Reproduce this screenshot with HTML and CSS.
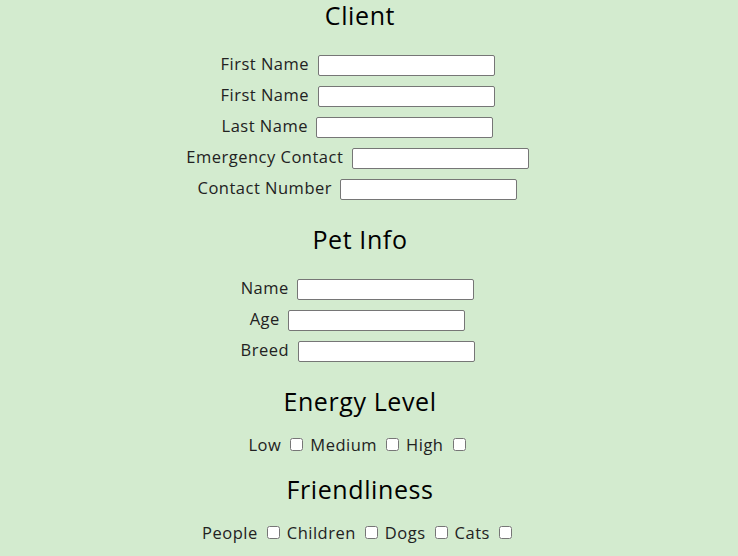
FILE: index.html
```html
<!DOCTYPE html>
<html lang="en">
<head>
<meta charset="utf-8">
<title>Pet Form</title>
<link rel="stylesheet" href="styles.css">
</head>
<body>
<main class="page">
  <section class="section">
    <h2 class="title">Client</h2>
    <div class="rows">
      <div class="row"><label class="label">First Name</label><input class="field" type="text"></div>
      <div class="row"><label class="label">First Name</label><input class="field" type="text"></div>
      <div class="row"><label class="label">Last Name</label><input class="field" type="text"></div>
      <div class="row"><label class="label">Emergency Contact</label><input class="field" type="text"></div>
      <div class="row"><label class="label">Contact Number</label><input class="field" type="text"></div>
    </div>
  </section>
  <section class="section">
    <h2 class="title">Pet Info</h2>
    <div class="rows">
      <div class="row"><label class="label">Name</label><input class="field" type="text"></div>
      <div class="row"><label class="label">Age</label><input class="field" type="text"></div>
      <div class="row"><label class="label">Breed</label><input class="field" type="text"></div>
    </div>
  </section>
  <section class="section section-checks">
    <h2 class="title">Energy Level</h2>
    <div class="checks">
      <label class="check">Low <input class="box" type="checkbox"></label>
      <label class="check">Medium <input class="box" type="checkbox"></label>
      <label class="check">High <input class="box" type="checkbox"></label>
    </div>
  </section>
  <section class="section section-checks">
    <h2 class="title">Friendliness</h2>
    <div class="checks">
      <label class="check">People <input class="box" type="checkbox"></label>
      <label class="check">Children <input class="box" type="checkbox"></label>
      <label class="check">Dogs <input class="box" type="checkbox"></label>
      <label class="check">Cats <input class="box" type="checkbox"></label>
    </div>
  </section>
</main>
</body>
</html>
```
FILE: styles.css
```css
html, body {
  margin: 0;
  padding: 0;
  background: #d3ebcf;
}
body {
  font-family: "Open Sans", "DejaVu Sans", sans-serif;
  color: #222;
}
.page {
  width: 720px;
  display: flex;
  flex-direction: column;
}
.section {
  display: flex;
  flex-direction: column;
  align-items: center;
  margin-bottom: 19px;
}
.section-checks {
  margin-bottom: 13px;
}
.title {
  margin: 0 0 18px;
  height: 32px;
  line-height: 30px;
  font-size: 25px;
  letter-spacing: 0.6px;
  font-weight: 400;
  color: #000;
}
.section-checks .title {
  margin-bottom: 12px;
}
.rows {
  display: flex;
  flex-direction: column;
  align-items: center;
  padding-right: 5px;
}
.row {
  height: 31px;
  display: flex;
  align-items: center;
  gap: 8.5px;
}
.label {
  font-size: 16.5px;
  letter-spacing: 0.5px;
  line-height: 20px;
  margin-bottom: 3px;
}
.field {
  box-sizing: border-box;
  width: 177px;
  height: 21px;
  margin: 0;
  border: 1px solid #767676;
  border-radius: 2px;
  background: #fff;
  padding: 1px 2px;
}
.checks {
  height: 31px;
  display: flex;
  align-items: center;
  gap: 4px;
  padding-right: 3px;
}
.check {
  font-size: 16.5px;
  letter-spacing: 0.5px;
  line-height: 20px;
  display: flex;
  align-items: center;
  margin-bottom: 2px;
}
.box {
  width: 13px;
  height: 13px;
  margin: 0 3px 0 9px;
}
```
